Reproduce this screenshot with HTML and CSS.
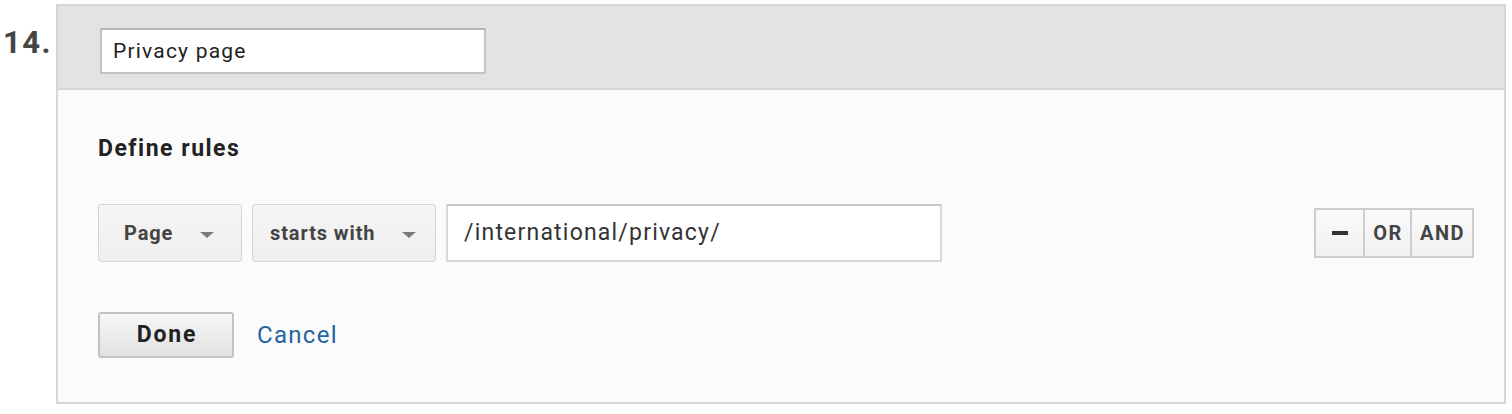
FILE: index.html
```html
<!DOCTYPE html>
<html>
<head>
<meta charset="utf-8">
<link rel="stylesheet" href="styles.css">
</head>
<body>
<div class="item">
  <div class="num">14.</div>
  <div class="panel">
    <div class="panel-head">
      <div class="name-input">Privacy page</div>
    </div>
    <div class="panel-body">
      <div class="heading">Define rules</div>
      <div class="rule-row">
        <div class="select sel-page"><span>Page</span><span class="caret"></span></div>
        <div class="select sel-op"><span>starts with</span><span class="caret"></span></div>
        <div class="value-input">/international/privacy/</div>
        <div class="logic">
          <div class="seg seg-minus"><span class="dash"></span></div>
          <div class="seg seg-or">OR</div>
          <div class="seg seg-and">AND</div>
        </div>
      </div>
      <div class="actions">
        <div class="btn-done">Done</div>
        <div class="link-cancel">Cancel</div>
      </div>
    </div>
  </div>
</div>
</body>
</html>
```
FILE: styles.css
```css
* { box-sizing: border-box; }
html, body { margin: 0; padding: 0; background: #ffffff; }
body {
  font-family: Roboto, "Liberation Sans", Arial, sans-serif;
  color: #222;
}
.item {
  display: flex;
  align-items: flex-start;
  padding-top: 4px;
}
.num {
  width: 56px;
  padding-left: 3px;
  padding-top: 21px;
  font-size: 31px;
  font-weight: 700;
  line-height: 35px;
  letter-spacing: 1.5px;
  color: #444;
}
.panel {
  width: 1450px;
  height: 400px;
  border: 2px solid #d6d6d6;
  background: #fbfbfb;
  display: flex;
  flex-direction: column;
}
.panel-head {
  height: 84px;
  background: #e3e3e3;
  border-bottom: 2px solid #d6d6d6;
  padding: 22px 0 0 42px;
}
.name-input {
  width: 386px;
  height: 46px;
  background: #fff;
  border: 2px solid #c4c4c4;
  border-top-color: #b4b4b4;
  font-size: 21px;
  letter-spacing: 1.2px;
  line-height: 42px;
  padding-left: 11px;
  color: #222;
}
.panel-body {
  flex: 1;
  padding: 46px 30px 0 40px;
}
.heading {
  font-size: 23px;
  font-weight: 700;
  letter-spacing: 1.5px;
  line-height: 26px;
  color: #222;
}
.rule-row {
  margin-top: 42px;
  display: flex;
  align-items: center;
  gap: 10px;
  height: 58px;
}
.select {
  height: 58px;
  border: 1px solid #d5d5d5;
  border-radius: 3px;
  background: linear-gradient(#f5f5f5, #efefef);
  display: flex;
  align-items: center;
  font-size: 20px;
  font-weight: 700;
  letter-spacing: 0.9px;
  color: #444;
}
.sel-page { width: 144px; padding-left: 25px; }
.sel-op { width: 184px; padding-left: 17px; }
.sel-page .caret { margin-left: 27px; }
.sel-op .caret { margin-left: 27px; }
.caret {
  width: 0;
  height: 0;
  border-left: 7px solid transparent;
  border-right: 7px solid transparent;
  border-top: 6px solid #7a7a7a;
  margin-top: 3px;
}
.value-input {
  width: 496px;
  height: 58px;
  background: #fff;
  border: 2px solid #d8d8d8;
  border-top-color: #c6c6c6;
  font-size: 23px;
  letter-spacing: 1.2px;
  line-height: 54px;
  padding-left: 16px;
  color: #333;
}
.logic {
  margin-left: auto;
  display: flex;
  height: 50px;
  border: 2px solid #cdcdcd;
  background: linear-gradient(#fafafa, #f1f1f1);
}
.seg {
  display: flex;
  align-items: center;
  justify-content: center;
  font-size: 20px;
  font-weight: 700;
  letter-spacing: 1.5px;
  color: #444;
}
.seg + .seg { border-left: 2px solid #cdcdcd; }
.seg-minus { width: 47px; }
.seg-or { width: 47px; padding-left: 1px; }
.seg-and { width: 62px; padding-left: 1px; }
.dash {
  width: 16px;
  height: 4px;
  background: #333;
}
.actions {
  margin-top: 50px;
  display: flex;
  align-items: center;
  gap: 23px;
}
.btn-done {
  width: 136px;
  height: 46px;
  border: 2px solid #c2c2c2;
  border-radius: 3px;
  background: linear-gradient(#f7f7f7, #e1e1e1);
  font-size: 23px;
  font-weight: 700;
  letter-spacing: 1.8px;
  line-height: 42px;
  text-align: center;
  padding-left: 2px;
  color: #222;
}
.link-cancel {
  font-size: 24px;
  letter-spacing: 1.3px;
  color: #2463a2;
}
```
